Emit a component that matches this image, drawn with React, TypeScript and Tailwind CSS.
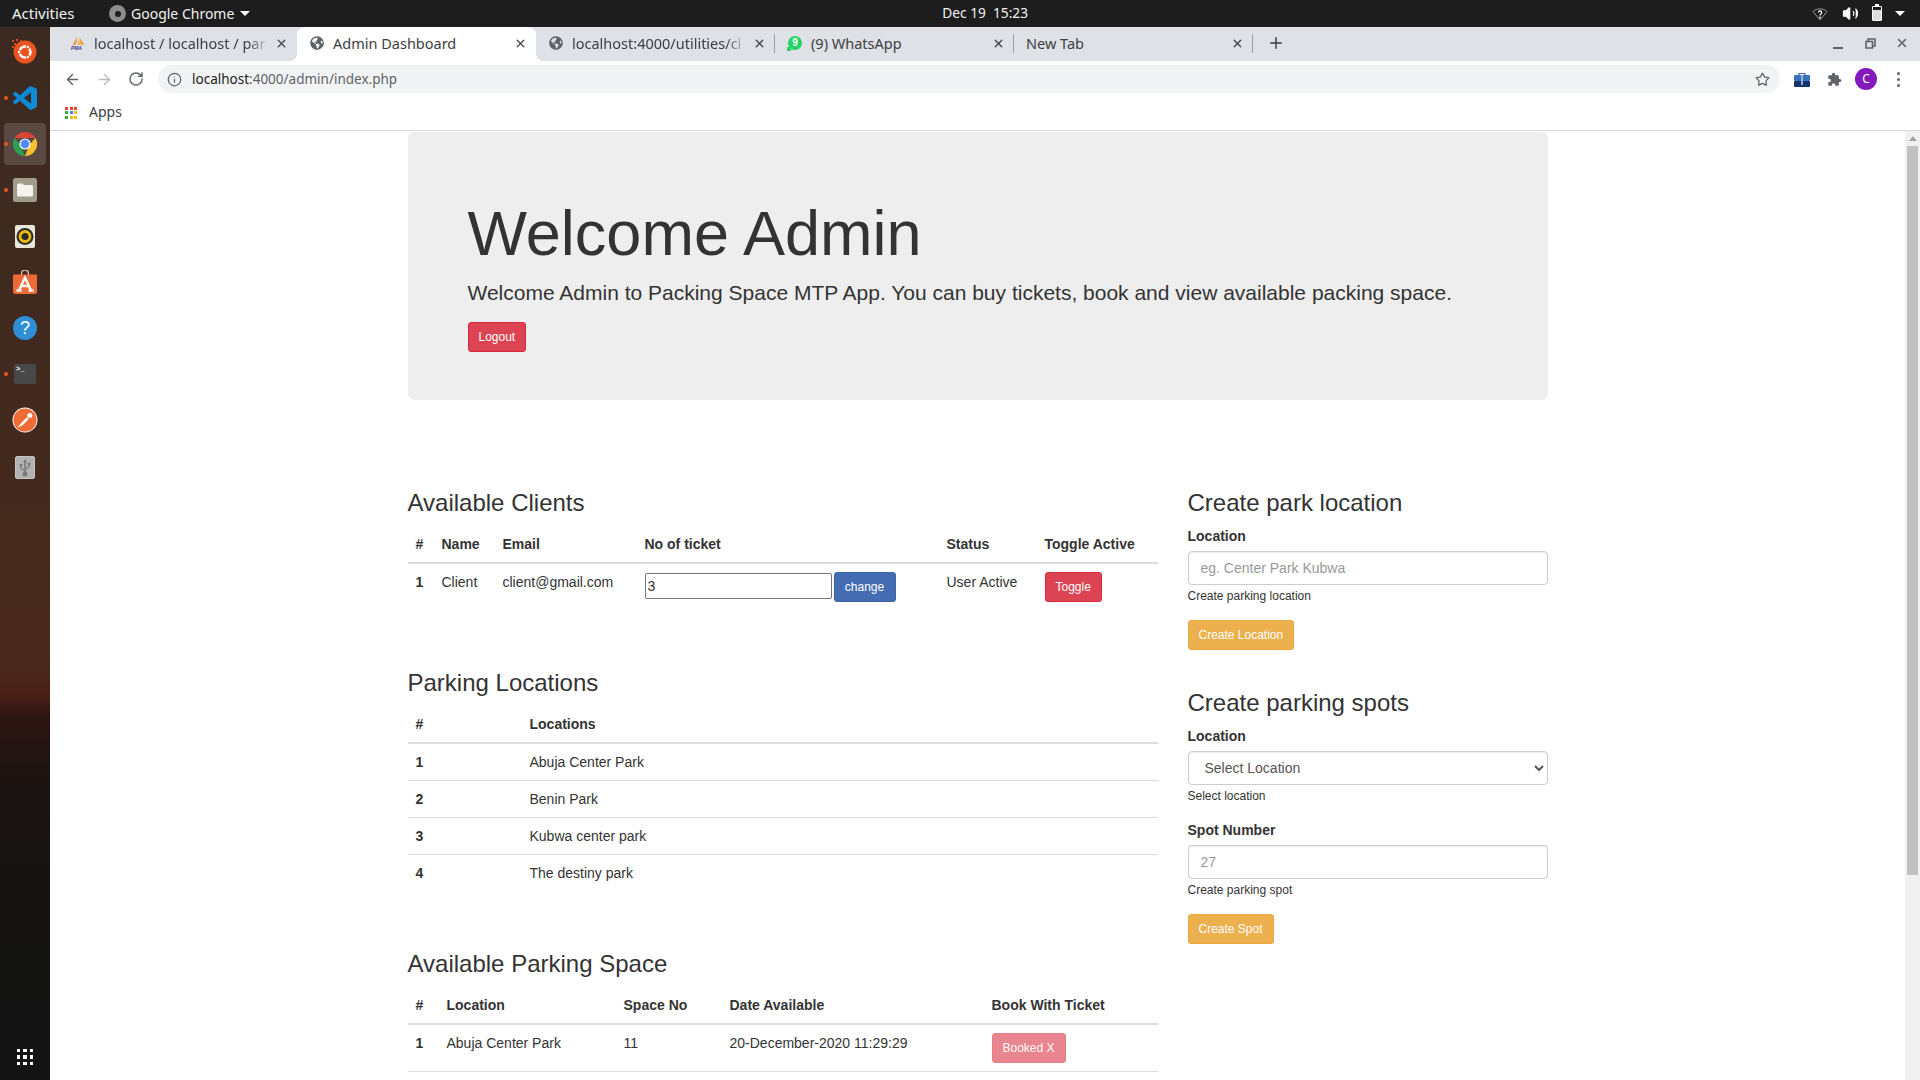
import React from 'react';
import { FaGlobeAmericas } from 'react-icons/fa';
import { Volume2, X, Plus, ArrowLeft, ArrowRight, RotateCw, Star, Info } from 'lucide-react';

const uiFont = "font-['Noto_Sans',sans-serif]";

const UbuntuIcon = () => (
  <svg width="26" height="26" viewBox="1 1 26 26" className="overflow-visible">
    <circle cx="14" cy="14" r="11.500" fill="#e95420" />
    <circle cx="14" cy="14" r="5.500" fill="none" stroke="#fff" strokeWidth="2.400" />
    <circle cx="8" cy="14" r="1.800" fill="#fff" stroke="#e95420" />
    <circle cx="17" cy="9" r="1.800" fill="#fff" stroke="#e95420" />
    <circle cx="17" cy="19" r="1.800" fill="#fff" stroke="#e95420" />
    <g fill="#e95420" opacity=".85">
      <rect x="1" y="2" width="2" height="2" />
      <rect x="5" y="1" width="2" height="2" />
      <rect x="9" y="2" width="2" height="2" />
      <rect x="3" y="5" width="2" height="2" />
      <rect x="7" y="4" width="2" height="2" />
      <rect x="1" y="8" width="2" height="2" />
    </g>
  </svg>
);

const VsCodeIcon = () => (
  <svg width="24" height="24" viewBox="0 0 24 24">
    <path
      fill="#0f8ad6"
      d="M23.15 2.587L18.21.21a1.494 1.494 0 0 0-1.705.29l-9.46 8.63-4.12-3.128a.999.999 0 0 0-1.276.057L.327 7.261A1 1 0 0 0 .326 8.74L3.899 12 .326 15.26a1 1 0 0 0 .001 1.479L1.65 17.94a.999.999 0 0 0 1.276.057l4.12-3.128 9.46 8.63a1.492 1.492 0 0 0 1.704.29l4.942-2.377A1.5 1.5 0 0 0 24 20.06V3.939a1.5 1.5 0 0 0-.85-1.352zm-5.146 14.861L10.826 12l7.178-5.448v10.896z"
    />
  </svg>
);

const ChromeIcon = () => (
  <svg width="24" height="24" viewBox="0 0 24 24">
    <path fill="#db4437" d="M1.6 6A12 12 0 0 1 22.4 6H12z" />
    <path fill="#fbc02d" d="M22.4 6A12 12 0 0 1 12 24l5-12z" />
    <path fill="#2e9e4f" d="M12 24A12 12 0 0 1 1.6 6L7 12z" />
    <circle cx="12" cy="12" r="5.600" fill="#fff" />
    <circle cx="12" cy="12" r="4.400" fill="#4c8bf5" />
  </svg>
);

const FilesIcon = () => (
  <svg width="24" height="24" viewBox="0 0 24 24">
    <rect width="24" height="24" rx="2.500" fill="#a09c8c" />
    <path fill="#f4f2ec" d="M4 7a1.500 1.500 0 0 1 1.500-1.500h4L11 7h7.500A1.500 1.500 0 0 1 20 8.500V17a1.500 1.500 0 0 1-1.500 1.500h-13A1.500 1.500 0 0 1 4 17z" />
  </svg>
);

const RhythmboxIcon = () => (
  <svg width="20" height="23" viewBox="0 0 20 23">
    <rect width="20" height="23" rx="2" fill="#e9e5da" />
    <circle cx="10" cy="11.500" r="8.500" fill="#2a2a28" />
    <circle cx="10" cy="11.500" r="5" fill="none" stroke="#e8bb14" strokeWidth="2.800" />
  </svg>
);

const SoftwareIcon = () => (
  <svg width="24" height="24" viewBox="0 0 24 24">
    <path d="M8.500 5V3.500a3.500 3.500 0 0 1 7 0V5" fill="none" stroke="#e9c3ac" strokeWidth="1.300" />
    <path fill="#ee6a36" d="M1 4.500h22a1 1 0 0 1 1 1V22a2 2 0 0 1-2 2H2a2 2 0 0 1-2-2V5.500a1 1 0 0 1 1-1z" />
    <path fill="none" stroke="#fff" strokeWidth="2.400" d="M6 20.500L12 7.500l6 13M8 16h8M3.500 20.500h5M15.500 20.500h5" />
  </svg>
);

const HelpIcon = () => (
  <div className="w-6 h-6 rounded-full bg-[#2e8fd6] flex items-center justify-center text-white text-[18px] leading-none font-['Liberation_Sans',sans-serif]">
    ?
  </div>
);

const TerminalIcon = () => (
  <div className="w-[22px] h-5 rounded-[2px] bg-[#484848] text-white text-[7px] leading-[9px] pl-[2px] pt-[1px] font-['Liberation_Mono',monospace] font-bold">
    &gt;_
  </div>
);

const PostmanIcon = () => (
  <svg width="26" height="26" viewBox="0 0 26 26">
    <circle cx="13" cy="13" r="12.500" fill="#fff" />
    <circle cx="13" cy="13" r="11.600" fill="#ef6c35" />
    <path fill="#fff" d="M5.500 20.500L9 16.300l6-6 1.700 1.700-6 6.300z" />
    <circle cx="17.800" cy="8.400" r="2.500" fill="#fff" />
  </svg>
);

const UsbIcon = () => (
  <div className="w-5 h-[23px] mt-[3px] rounded-[2px] bg-[#b2b2b2] border border-[#c4c4c4] flex items-center justify-center">
    <svg width="12" height="18" viewBox="0 0 12 18">
      <path fill="#7a7a7a" d="M6 0l2 3.500H6.800V13H5.200V3.500H4z" />
      <circle cx="6" cy="15" r="2.500" fill="#7a7a7a" />
      <path fill="none" stroke="#7a7a7a" strokeWidth="1.300" d="M6 12L2 9.500V7M6 10.500l4-2.500V6" />
      <rect x=".8" y="5" width="2.400" height="2.400" fill="#7a7a7a" />
      <circle cx="10" cy="5" r="1.400" fill="#7a7a7a" />
    </svg>
  </div>
);

const dockItems = [
  { key: 'ubuntu', icon: <UbuntuIcon />, dot: false, active: false },
  { key: 'vscode', icon: <VsCodeIcon />, dot: true, active: false },
  { key: 'chrome', icon: <ChromeIcon />, dot: true, active: true },
  { key: 'files', icon: <FilesIcon />, dot: true, active: false },
  { key: 'rhythmbox', icon: <RhythmboxIcon />, dot: false, active: false },
  { key: 'software', icon: <SoftwareIcon />, dot: false, active: false },
  { key: 'help', icon: <HelpIcon />, dot: false, active: false },
  { key: 'terminal', icon: <TerminalIcon />, dot: true, active: false },
  { key: 'postman', icon: <PostmanIcon />, dot: false, active: false },
  { key: 'usb', icon: <UsbIcon />, dot: false, active: false },
];

const Dock = () => (
  <div className="w-[50px] shrink-0 flex flex-col items-center pt-[2px] pb-[15px] bg-[linear-gradient(180deg,#3b2a21_0%,#432a1f_40%,#4a2a1c_60%,#4a1f16_63.500%,#2a1511_65.500%,#1c1412_72%,#151413_82%,#141414_100%)]">
    {dockItems.map((item) => (
      <div key={item.key} className="relative w-[50px] h-[46px] flex items-center justify-center">
        {item.active && <div className="absolute left-1 top-[2px] w-[42px] h-[42px] rounded-[4px] bg-white/15" />}
        {item.dot && <div className="absolute left-[4px] top-[21px] w-1 h-1 rounded-full bg-[#e95420]" />}
        <div className="relative">{item.icon}</div>
      </div>
    ))}
    <div className="mt-auto grid grid-cols-3 gap-x-[3px] gap-y-[3px]">
      {Array.from({ length: 9 }).map((_, i) => (
        <div key={i} className="w-[3.500px] h-[3.500px] bg-white" />
      ))}
    </div>
  </div>
);

const TopBar = () => (
  <div className={`h-[27px] shrink-0 bg-[#1d1d1d] text-[#f2f2f2] text-[14px] flex items-center ${uiFont}`}>
    <span className="ml-3 w-[62px] text-[15px]">Activities</span>
    <span className="ml-[35px] w-[17px] h-[17px] rounded-full bg-[#8d8d8d] flex items-center justify-center">
      <span className="w-[6px] h-[6px] rounded-full bg-[#1d1d1d]" />
    </span>
    <span className="ml-[5px]">Google Chrome</span>
    <span className="ml-[6px] w-0 h-0 border-x-[5px] border-x-transparent border-t-[5px] border-t-white" />
    <span className="ml-[692px] text-[13.700px]">Dec 19&nbsp;&nbsp;15:23</span>
    <div className="ml-auto flex items-center pr-[15px]">
      <svg width="16" height="14" viewBox="0 0 16 14" className="mr-[14px]">
        <path d="M1 4.500C5 1 11 1 15 4.500L8 13z" fill="none" stroke="#9a9a9a" strokeWidth="1" />
        <path d="M6.500 5.500a1.600 1.600 0 1 1 2.400 1.400C8.200 7.300 8 7.700 8 8.500" fill="none" stroke="#fff" strokeWidth="1.200" />
        <circle cx="8" cy="10.500" r=".9" fill="#fff" />
      </svg>
      <Volume2 size={17} color="#fff" fill="#fff" strokeWidth={1.500} className="mr-[13px]" />
      <div className="mr-[13px] w-[10px] h-[15px] border border-white rounded-[1px] flex items-end relative">
        <div className="w-full h-[10px] bg-white/85" />
        <div className="absolute -top-[3px] left-[2px] w-1 h-[2px] bg-white" />
      </div>
      <span className="w-0 h-0 border-x-[5px] border-x-transparent border-t-[5px] border-t-white" />
    </div>
  </div>
);

const PmaIcon = () => (
  <svg width="18" height="16" viewBox="0 0 18 16">
    <path fill="#f09c2a" d="M3 10L8 1l-1 9zM9 10l1-9 1 9zM12 10L11 2l5 8z" />
    <text x="1" y="15.500" fontSize="5.500" fontWeight="700" fontStyle="italic" fill="#3a3a8c" fontFamily="Liberation Sans">PMA</text>
  </svg>
);

const WhatsAppIcon = () => (
  <div className="relative w-[14px] h-[14px] rounded-full bg-[#25d366] text-white text-[10px] leading-[14px] text-center font-bold font-['Liberation_Sans',sans-serif]">
    9
    <div className="absolute -bottom-[1px] -left-[1px] w-1 h-1 bg-[#25d366]" />
  </div>
);

const tabs = [
  { title: 'localhost / localhost / par', icon: <PmaIcon />, active: false, fade: true, sep: false },
  { title: 'Admin Dashboard', icon: <FaGlobeAmericas size={14} color="#5f6368" />, active: true, fade: false, sep: false },
  { title: 'localhost:4000/utilities/cl', icon: <FaGlobeAmericas size={14} color="#5f6368" />, active: false, fade: true, sep: true },
  { title: '(9) WhatsApp', icon: <WhatsAppIcon />, active: false, fade: false, sep: true },
  { title: 'New Tab', icon: null, active: false, fade: false, sep: true },
];

const TabStrip = () => (
  <div className={`h-[34px] shrink-0 bg-[#dee1e6] flex items-stretch pl-2 text-[14.500px] text-[#3c4043] ${uiFont}`}>
    {tabs.map((tab) => (
      <div
        key={tab.title}
        className={`relative w-[239px] flex items-center pl-[12px] pr-[9px] pb-[2px] ${tab.active ? 'bg-white rounded-t-lg text-[#3c4043]' : ''}`}
      >
        {tab.icon && <div className="w-[16px] mr-[8px] flex items-center justify-center shrink-0">{tab.icon}</div>}
        <div
          className={`flex-1 whitespace-nowrap translate-y-px ${tab.fade ? '[mask-image:linear-gradient(90deg,#000_88%,transparent_100%)]' : ''}`}
        >
          {tab.title}
        </div>
        <X size={13} color="#45484c" strokeWidth={2.500} className="ml-[6px] shrink-0" />
        {tab.active && (
          <>
            <div className="absolute -left-2 bottom-0 w-2 h-2 bg-[radial-gradient(circle_at_0_0,transparent_8px,#fff_8px)]" />
            <div className="absolute -right-2 bottom-0 w-2 h-2 bg-[radial-gradient(circle_at_100%_0,transparent_8px,#fff_8px)]" />
          </>
        )}
        {tab.sep && <div className="absolute right-0 top-[7px] h-[19px] w-px bg-[#9aa0a6]" />}
      </div>
    ))}
    <div className="w-[46px] flex items-center justify-center pb-[2px]">
      <Plus size={18} color="#3c4043" strokeWidth={2} />
    </div>
    <div className="ml-auto flex items-center pr-[2px]">
      <div className="w-[32px] flex justify-center pt-[7px]">
        <div className="w-[10px] h-[2px] bg-[#5f6368]" />
      </div>
      <div className="w-[32px] flex justify-center pb-[2px]">
        <svg width="11" height="11" viewBox="0 0 11 11">
          <path fill="none" stroke="#5f6368" strokeWidth="1.600" d="M3 3V1h7v7H8M1 3.500h6.500V10H1z" />
        </svg>
      </div>
      <div className="w-[32px] flex justify-center pb-[2px]">
        <X size={14} color="#5f6368" strokeWidth={2.500} />
      </div>
    </div>
  </div>
);

const Toolbar = () => (
  <div className={`h-[36px] shrink-0 bg-white flex items-center pl-[6px] pr-[6px] ${uiFont}`}>
    <div className="w-8 flex justify-center"><ArrowLeft size={17} color="#5f6368" strokeWidth={2} /></div>
    <div className="w-8 flex justify-center"><ArrowRight size={17} color="#babcbe" strokeWidth={2} /></div>
    <div className="w-8 flex justify-center"><RotateCw size={16} color="#5f6368" strokeWidth={2.200} /></div>
    <div className="ml-[6px] mr-[6px] flex-1 h-[28px] rounded-full bg-[#f1f3f4] flex items-center pl-[9px] pr-[10px]">
      <Info size={15} color="#5f6368" strokeWidth={2} />
      <span className="ml-[10px] text-[13.500px] text-[#5f6368]">
        <span className="text-[#202124]">localhost</span>:4000/admin/index.php
      </span>
      <Star size={15} color="#5f6368" strokeWidth={2} className="ml-auto" />
    </div>
    <div className="w-8 flex justify-center">
      <svg width="16" height="15" viewBox="0 0 16 15">
        <path d="M5 3V1.500h6V3" fill="none" stroke="#3b68b5" strokeWidth="1.200" />
        <rect y="3" width="16" height="6" rx="1" fill="#3a72bd" />
        <rect y="9" width="16" height="6" rx="1" fill="#15326e" />
        <rect x="7.200" y="3" width="1.600" height="10" fill="#a9c8ee" />
      </svg>
    </div>
    <div className="w-8 flex justify-center">
      <svg width="15" height="15" viewBox="0 0 24 24">
        <path fill="#5f6368" d="M20.500 11H19V7a2 2 0 0 0-2-2h-4V3.500a2.500 2.500 0 0 0-5 0V5H4a2 2 0 0 0-2 2v3.800h1.500a2.700 2.700 0 0 1 0 5.400H2V20a2 2 0 0 0 2 2h3.800v-1.500a2.700 2.700 0 0 1 5.400 0V22H17a2 2 0 0 0 2-2v-4h1.500a2.500 2.500 0 0 0 0-5z" />
      </svg>
    </div>
    <div className="w-8 flex justify-center">
      <div className="w-[22px] h-[22px] rounded-full bg-[#8419bd] text-white text-[12px] leading-[22px] text-center">C</div>
    </div>
    <div className="w-8 flex flex-col items-center gap-[3px]">
      <div className="w-[3px] h-[3px] rounded-full bg-[#5f6368]" />
      <div className="w-[3px] h-[3px] rounded-full bg-[#5f6368]" />
      <div className="w-[3px] h-[3px] rounded-full bg-[#5f6368]" />
    </div>
  </div>
);

const appColors = ['#ea4335', '#ea4335', '#ea4335', '#34a853', '#4285f4', '#fbbc05', '#34a853', '#fbbc05', '#fbbc05'];

const BookmarksBar = () => (
  <div className={`h-[34px] shrink-0 bg-white border-b border-[#d6d8db] flex items-center pl-[15px] pb-[2px] text-[14px] text-[#3c4043] ${uiFont}`}>
    <div className="grid grid-cols-3 gap-[1.500px] w-[12px]">
      {appColors.map((c, i) => (
        <div key={i} className="w-[3px] h-[3px]" style={{ backgroundColor: c }} />
      ))}
    </div>
    <span className="ml-[12px] -translate-y-px">Apps</span>
  </div>
);

const thClass = 'px-2 py-2 text-left text-[14px] leading-5 font-bold border-b-2 border-[#ddd] align-bottom';
const tdClass = 'px-2 py-2 text-[14px] leading-5 align-top border-t border-[#ddd]';

const Button = ({ color, children, className = '' }: { color: string; children: React.ReactNode; className?: string }) => (
  <button type="button" className={`h-[30px] px-[10px] rounded-[3px] border text-white text-[12px] leading-[18px] ${color} ${className}`}>
    {children}
  </button>
);

const ClientsTable = () => (
  <table className="w-full table-fixed border-collapse">
    <colgroup>
      <col className="w-[26px]" />
      <col className="w-[61px]" />
      <col className="w-[142px]" />
      <col className="w-[302px]" />
      <col className="w-[98px]" />
      <col className="w-[121px]" />
    </colgroup>
    <thead>
      <tr>
        <th className={thClass}>#</th>
        <th className={thClass}>Name</th>
        <th className={thClass}>Email</th>
        <th className={thClass}>No of ticket</th>
        <th className={thClass}>Status</th>
        <th className={thClass}>Toggle Active</th>
      </tr>
    </thead>
    <tbody>
      <tr>
        <td className={`${tdClass} font-bold`}>1</td>
        <td className={tdClass}>Client</td>
        <td className={tdClass}>client@gmail.com</td>
        <td className={tdClass}>
          <div className="flex items-start gap-[2px]">
            <input
              readOnly
              value="3"
              className="w-[187px] h-[26px] mt-px border border-[#767676] rounded-[2px] px-[2px] text-[14px] text-[#333] outline-none"
            />
            <Button color="bg-[#446cb3] border-[#3e63a6]" className="w-[62px]">change</Button>
          </div>
        </td>
        <td className={tdClass}>User Active</td>
        <td className={tdClass}>
          <Button color="bg-[#dc4454] border-[#d8283c]">Toggle</Button>
        </td>
      </tr>
    </tbody>
  </table>
);

const locations = ['Abuja Center Park', 'Benin Park', 'Kubwa center park', 'The destiny park'];

const LocationsTable = () => (
  <table className="w-full table-fixed border-collapse">
    <colgroup>
      <col className="w-[114px]" />
      <col />
    </colgroup>
    <thead>
      <tr>
        <th className={thClass}>#</th>
        <th className={thClass}>Locations</th>
      </tr>
    </thead>
    <tbody>
      {locations.map((name, i) => (
        <tr key={name}>
          <td className={`${tdClass} font-bold`}>{i + 1}</td>
          <td className={tdClass}>{name}</td>
        </tr>
      ))}
    </tbody>
  </table>
);

const SpacesTable = () => (
  <table className="w-full table-fixed border-collapse">
    <colgroup>
      <col className="w-[31px]" />
      <col className="w-[177px]" />
      <col className="w-[106px]" />
      <col className="w-[262px]" />
      <col className="w-[174px]" />
    </colgroup>
    <thead>
      <tr>
        <th className={thClass}>#</th>
        <th className={thClass}>Location</th>
        <th className={thClass}>Space No</th>
        <th className={thClass}>Date Available</th>
        <th className={thClass}>Book With Ticket</th>
      </tr>
    </thead>
    <tbody>
      <tr className="border-b border-[#ddd]">
        <td className={`${tdClass} font-bold`}>1</td>
        <td className={tdClass}>Abuja Center Park</td>
        <td className={tdClass}>11</td>
        <td className={tdClass}>20-December-2020 11:29:29</td>
        <td className={tdClass}>
          <Button color="bg-[#dc3545] border-[#d9283a] opacity-60">Booked X</Button>
        </td>
      </tr>
    </tbody>
  </table>
);

const heading = 'text-[24px] leading-[26.400px] font-medium mb-[10px]';
const fieldClass =
  'block w-full h-[34px] px-3 py-[6px] text-[14px] text-[#555] bg-white border border-[#ccc] rounded shadow-[inset_0_1px_1px_rgba(0,0,0,0.075)] outline-none placeholder:text-[#999]';

const Field = ({ label, help, children }: { label: string; help: string; children: React.ReactNode }) => (
  <div className="mb-[14px]">
    <label className="block text-[14px] leading-5 font-bold mb-[5px]">{label}</label>
    {children}
    <small className="block text-[12px] leading-5 pt-px">{help}</small>
  </div>
);

const Sidebar = () => (
  <div className="w-[360px] shrink-0">
    <h3 className={heading}>Create park location</h3>
    <Field label="Location" help="Create parking location">
      <input className={fieldClass} placeholder="eg. Center Park Kubwa" />
    </Field>
    <Button color="bg-[#edb04e] border-[#eaa73a]">Create Location</Button>

    <h3 className={`${heading} mt-[40px] !mb-[9px]`}>Create parking spots</h3>
    <Field label="Location" help="Select location">
      <select className={fieldClass} defaultValue="">
        <option value="">Select Location</option>
      </select>
    </Field>
    <Field label="Spot Number" help="Create parking spot">
      <input className={fieldClass} placeholder="27" />
    </Field>
    <Button color="bg-[#edb04e] border-[#eaa73a]">Create Spot</Button>
  </div>
);

const Scrollbar = () => (
  <div className="w-[15px] shrink-0 bg-[#f1f1f1] flex flex-col items-center pt-[5px]">
    <div className="w-0 h-0 border-x-[4px] border-x-transparent border-b-[5px] border-b-[#a3a3a3]" />
    <div className="mt-[5px] w-[11px] h-[729px] bg-[#c1c1c1]" />
  </div>
);

const Page = () => (
  <div className="flex-1 min-h-0 flex bg-white overflow-hidden">
    <div className="flex-1 min-w-0 overflow-hidden text-[#333] font-['Liberation_Sans',Arial,sans-serif]">
      <div className="w-[1140px] mx-auto pt-[1px]">
        <div className="bg-[#eee] rounded-md px-[60px] pt-[67px] pb-[48px] h-[268px]">
          <h1 className="text-[63px] leading-[69.300px] font-medium mb-[10px]">Welcome Admin</h1>
          <p className="text-[21px] leading-[30px] font-extralight mb-[14px]">
            Welcome Admin to Packing Space MTP App. You can buy tickets, book and view available packing space.
          </p>
          <Button color="bg-[#dc4454] border-[#d8283c]">Logout</Button>
        </div>
        <div className="flex gap-[30px] mt-[90px]">
          <div className="w-[750px] shrink-0">
            <h3 className={heading}>Available Clients</h3>
            <ClientsTable />
            <h3 className={`${heading} mt-[60px] !mb-[9px]`}>Parking Locations</h3>
            <LocationsTable />
            <h3 className={`${heading} mt-[60px]`}>Available Parking Space</h3>
            <SpacesTable />
          </div>
          <Sidebar />
        </div>
      </div>
    </div>
    <Scrollbar />
  </div>
);

const App: React.FC = () => {
  return (
    <div className="w-[1920px] h-[1080px] overflow-hidden flex flex-col bg-white">
      <TopBar />
      <div className="flex-1 min-h-0 flex">
        <Dock />
        <div className="flex-1 min-w-0 flex flex-col">
          <TabStrip />
          <Toolbar />
          <BookmarksBar />
          <Page />
        </div>
      </div>
    </div>
  );
};

export default App;
